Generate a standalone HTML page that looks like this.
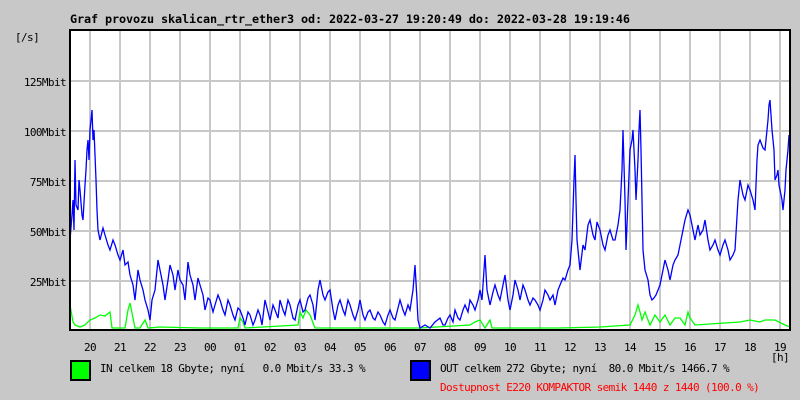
<!DOCTYPE html>
<html><head><meta charset="utf-8"><style>
html,body{margin:0;padding:0;background:#c8c8c8;width:800px;height:400px;overflow:hidden}
svg{display:block}
text{font-family:"DejaVu Sans Mono","Liberation Mono",monospace;font-size:11px;letter-spacing:-0.6px;white-space:pre}
</style></head><body>
<svg width="800" height="400" xmlns="http://www.w3.org/2000/svg" xml:space="preserve">
<rect width="800" height="400" fill="#c8c8c8"/>
<text x="70" y="23" font-weight="bold" fill="#000" style="font-size:11.8px;letter-spacing:0" textLength="560" lengthAdjust="spacing">Graf provozu skalican_rtr_ether3 od: 2022-03-27 19:20:49 do: 2022-03-28 19:19:46</text>
<rect x="70" y="30" width="720" height="300" fill="#fff"/>
<g stroke="#c8c8c8" stroke-width="2">
<line x1="90" y1="31" x2="90" y2="330"/><line x1="120" y1="31" x2="120" y2="330"/><line x1="150" y1="31" x2="150" y2="330"/><line x1="180" y1="31" x2="180" y2="330"/><line x1="210" y1="31" x2="210" y2="330"/><line x1="240" y1="31" x2="240" y2="330"/><line x1="270" y1="31" x2="270" y2="330"/><line x1="300" y1="31" x2="300" y2="330"/><line x1="330" y1="31" x2="330" y2="330"/><line x1="360" y1="31" x2="360" y2="330"/><line x1="390" y1="31" x2="390" y2="330"/><line x1="420" y1="31" x2="420" y2="330"/><line x1="450" y1="31" x2="450" y2="330"/><line x1="480" y1="31" x2="480" y2="330"/><line x1="510" y1="31" x2="510" y2="330"/><line x1="540" y1="31" x2="540" y2="330"/><line x1="570" y1="31" x2="570" y2="330"/><line x1="600" y1="31" x2="600" y2="330"/><line x1="630" y1="31" x2="630" y2="330"/><line x1="660" y1="31" x2="660" y2="330"/><line x1="690" y1="31" x2="690" y2="330"/><line x1="720" y1="31" x2="720" y2="330"/><line x1="750" y1="31" x2="750" y2="330"/><line x1="780" y1="31" x2="780" y2="330"/>
<line x1="70" y1="81" x2="790" y2="81"/><line x1="70" y1="131" x2="790" y2="131"/><line x1="70" y1="181" x2="790" y2="181"/><line x1="70" y1="231" x2="790" y2="231"/><line x1="70" y1="281" x2="790" y2="281"/>
</g>
<polyline fill="none" stroke="#00ff00" stroke-width="1.3" points="70,305 73,322 75,325 80,327 85,325 90,320 95,318 100,315 105,316 110,312 112,328 125,328 128,310 130,303 133,318 135,328 140,328 145,320 148,328 160,327 200,328 238,328 240,318 243,322 245,328 298,325 300,312 303,318 306,310 310,315 315,328 420,328 470,325 475,322 480,320 485,328 490,320 492,328 560,328 600,327 630,325 635,315 638,305 640,312 642,320 645,312 648,320 650,325 655,315 660,322 665,315 670,325 675,318 680,318 685,325 688,312 690,318 695,325 740,322 750,320 760,322 765,320 775,320 785,325 790,327"/>
<polyline fill="none" stroke="#0000ff" stroke-width="1.3" points="70,240 72,215 73,200 74,230 75,160 76,205 78,210 79,180 80,190 82,215 83,220 85,185 86,170 87,150 88,140 89,160 90,130 91,120 92,110 93,140 94,130 95,155 96,180 97,210 98,230 100,240 103,228 105,235 108,245 110,250 113,240 115,245 118,255 120,260 123,250 125,265 128,262 130,275 133,285 135,300 138,270 140,280 143,290 145,300 148,310 150,320 152,300 155,290 158,260 160,270 163,285 165,300 168,280 170,265 173,275 175,290 178,270 180,280 183,285 185,300 188,262 190,275 193,285 195,300 198,278 200,285 203,295 205,310 208,298 210,300 213,312 215,305 218,295 220,300 223,310 225,315 228,300 230,305 233,315 235,320 238,308 240,310 243,318 245,325 248,312 250,315 253,325 255,320 258,310 260,315 262,325 265,300 268,312 270,320 273,305 275,310 278,318 280,300 283,310 285,315 288,300 290,305 293,318 295,320 298,305 300,300 303,312 305,310 308,298 310,295 313,305 315,320 318,290 320,280 323,295 325,300 328,292 330,290 333,310 335,320 338,305 340,300 343,310 345,315 348,300 350,305 353,315 355,320 358,310 360,300 363,315 365,320 368,312 370,310 373,318 375,320 378,312 380,315 383,322 385,325 388,315 390,310 393,318 395,320 398,308 400,300 403,310 405,315 408,305 410,310 413,290 415,265 417,300 418,320 420,328 425,325 430,328 435,322 440,318 443,325 445,325 448,318 450,315 453,322 455,310 458,318 460,320 463,310 465,305 468,312 470,300 473,305 475,310 478,300 480,290 482,300 485,255 487,290 490,305 493,292 495,285 498,295 500,300 503,285 505,275 508,300 510,310 513,295 515,280 518,290 520,300 523,285 525,290 528,300 530,305 533,298 535,300 538,305 540,310 543,300 545,290 548,295 550,300 553,295 555,305 558,290 560,285 563,278 565,280 568,270 570,265 572,240 573,210 574,180 575,155 576,200 577,240 579,260 580,270 583,245 585,250 588,225 590,220 593,235 595,240 597,222 600,230 603,245 605,250 608,235 610,230 613,240 615,240 618,225 620,210 622,170 623,130 625,200 626,250 628,200 630,150 632,140 633,130 635,170 636,200 637,180 638,160 639,130 640,110 641,150 642,200 643,250 645,270 648,280 650,295 652,300 654,298 656,295 658,290 660,285 663,270 665,260 668,270 670,280 673,265 675,260 678,255 680,245 683,230 685,220 688,210 690,215 693,230 695,240 698,225 700,235 703,230 705,220 708,240 710,250 713,245 715,240 718,250 720,255 723,245 725,240 728,250 730,260 733,255 735,250 738,200 740,180 743,195 745,200 748,185 750,190 753,200 755,210 757,160 758,145 760,140 763,148 765,150 767,130 768,120 769,105 770,100 771,115 772,130 774,150 775,180 777,175 778,170 779,185 780,190 782,200 783,210 785,190 786,170 788,150 789,135"/>
<rect x="70" y="30" width="720" height="300" fill="none" stroke="#000" stroke-width="2"/>
<text x="15" y="41" fill="#000">[/s]</text>
<g text-anchor="end" fill="#000">
<text x="66" y="86">125Mbit</text><text x="66" y="136">100Mbit</text><text x="66" y="186">75Mbit</text><text x="66" y="236">50Mbit</text><text x="66" y="286">25Mbit</text>
</g>
<g text-anchor="middle" fill="#000">
<text x="90" y="351">20</text><text x="120" y="351">21</text><text x="150" y="351">22</text><text x="180" y="351">23</text><text x="210" y="351">00</text><text x="240" y="351">01</text><text x="270" y="351">02</text><text x="300" y="351">03</text><text x="330" y="351">04</text><text x="360" y="351">05</text><text x="390" y="351">06</text><text x="420" y="351">07</text><text x="450" y="351">08</text><text x="480" y="351">09</text><text x="510" y="351">10</text><text x="540" y="351">11</text><text x="570" y="351">12</text><text x="600" y="351">13</text><text x="630" y="351">14</text><text x="660" y="351">15</text><text x="690" y="351">16</text><text x="720" y="351">17</text><text x="750" y="351">18</text><text x="780" y="351">19</text><text x="780" y="361">[h]</text>
</g>
<rect x="71" y="361" width="19" height="19" fill="#00ff00" stroke="#000" stroke-width="2"/>
<text x="100" y="372" fill="#000">IN celkem 18 Gbyte; nyní   0.0 Mbit/s 33.3 %</text>
<rect x="411" y="361" width="19" height="19" fill="#0000ff" stroke="#000" stroke-width="2"/>
<text x="440" y="372" fill="#000">OUT celkem 272 Gbyte; nyní  80.0 Mbit/s 1466.7 %</text>
<text x="440" y="391" fill="#ff0000">Dostupnost E220 KOMPAKTOR semik 1440 z 1440 (100.0 %)</text>
</svg>
</body></html>
